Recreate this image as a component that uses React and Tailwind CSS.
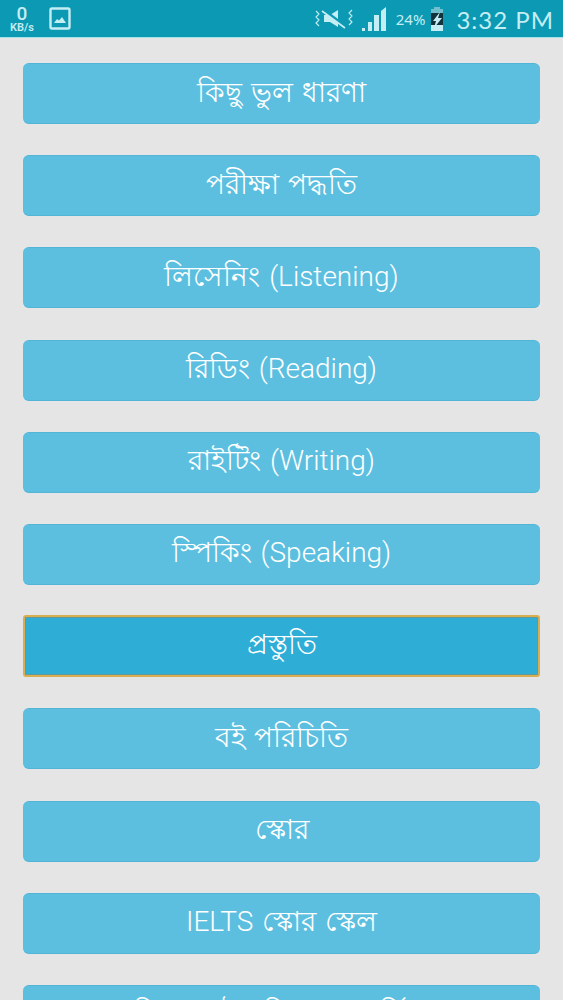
const items = [
  "কিছু ভুল ধারণা",
  "পরীক্ষা পদ্ধতি",
  "লিসেনিং (Listening)",
  "রিডিং (Reading)",
  "রাইটিং (Writing)",
  "স্পিকিং (Speaking)",
  "প্রস্তুতি",
  "বই পরিচিতি",
  "স্কোর",
  "IELTS স্কোর স্কেল",
  "বিদেশে উচ্চশিক্ষা সম্পর্কিত",
];

function StatusBar() {
  return (
    <div className="h-[38px] shrink-0 bg-[#0c99b4] border-b border-[#a5e3ec] flex items-center text-[#c4eef3] font-['Roboto',sans-serif]">
      <div className="w-[44px] flex flex-col items-center">
        <span className="text-[19px] font-medium leading-[16px] mt-[2px]">0</span>
        <span className="text-[11px] font-semibold leading-[11px]">KB/s</span>
      </div>
      <svg className="ml-[5px]" width="22" height="23" viewBox="0 0 22 23" fill="none">
        <rect x="1.5" y="1.5" width="19" height="20" rx="1.5" stroke="currentColor" strokeWidth="2.4" />
        <path d="M5 16l3-4 2 1.5 3-3.5 4 6z" fill="currentColor" />
      </svg>
      <div className="ml-auto flex items-center pr-[9px]">
        <svg width="38" height="24" viewBox="0 0 38 24" fill="none" stroke="currentColor">
          <path d="M1 4l3 3-3 3 3 3-3 3 3 3M37 3l-3 3 3 3-3 3 3 3-3 3" strokeWidth="1.1" />
          <path d="M9 8h6l8-5v17l-8-5H9z" fill="currentColor" stroke="none" />
          <path d="M7 2l24 18" stroke="#0c99b4" strokeWidth="3.4" />
          <path d="M7 4l23 17" strokeWidth="1.7" />
        </svg>
        <svg className="ml-[9px]" width="25" height="26" viewBox="0 0 25 26" fill="currentColor">
          <path d="M0 25h3v-3H0zM6 25h4V16H6zM12 25h5V9h-5zM19 25h5V1l-5 4z" />
        </svg>
        <span className="ml-[9px] text-[15px] leading-none mt-[1px] font-['Noto_Sans',sans-serif]">24%</span>
        <svg className="ml-[4px]" width="16" height="26" viewBox="0 0 16 26">
          <path d="M5 1h6v2h3v4H2V3h3z" fill="#6fbfcd" />
          <path d="M2 7h12v12H2z" fill="#12323c" />
          <path d="M2 19h12v6H2z" fill="currentColor" />
          <path d="M11 6L4 15h3l-2 7 8-10H9z" fill="#c4eef3" />
        </svg>
        <span className="ml-[11px] mt-[3px] text-[24px] leading-none tracking-[1px] font-normal font-['Lato',sans-serif]">3:32 PM</span>
      </div>
    </div>
  );
}

function MenuButton({ label, active }) {
  return (
    <button
      className={
        active
          ? "h-[62px] -mt-[1px] shrink-0 pb-[2px] rounded-[3px] bg-[#2eadd6] border-2 border-[#d9ae50] shadow-[inset_0_0_0_1px_#5f9a9c] text-white text-[28px] font-[350] [word-spacing:2px] font-['Roboto','Noto_Sans',sans-serif]"
          : "h-[61px] shrink-0 pb-[2px] rounded-[6px] bg-[#5cbfe0] border-b border-t border-[#52b5d8] text-white text-[28px] font-[350] [word-spacing:2px] font-['Roboto','Noto_Sans',sans-serif]"
      }
    >
      {label}
    </button>
  );
}

export default function App() {
  return (
    <div className="h-[1000px] overflow-hidden flex flex-col bg-[#e5e5e6]">
      <StatusBar />
      <div className="flex flex-col gap-[31.2px] pt-[25px] px-[23px]">
        {items.map((label, i) => (
          <MenuButton key={i} label={label} active={i === 6} />
        ))}
      </div>
    </div>
  );
}
